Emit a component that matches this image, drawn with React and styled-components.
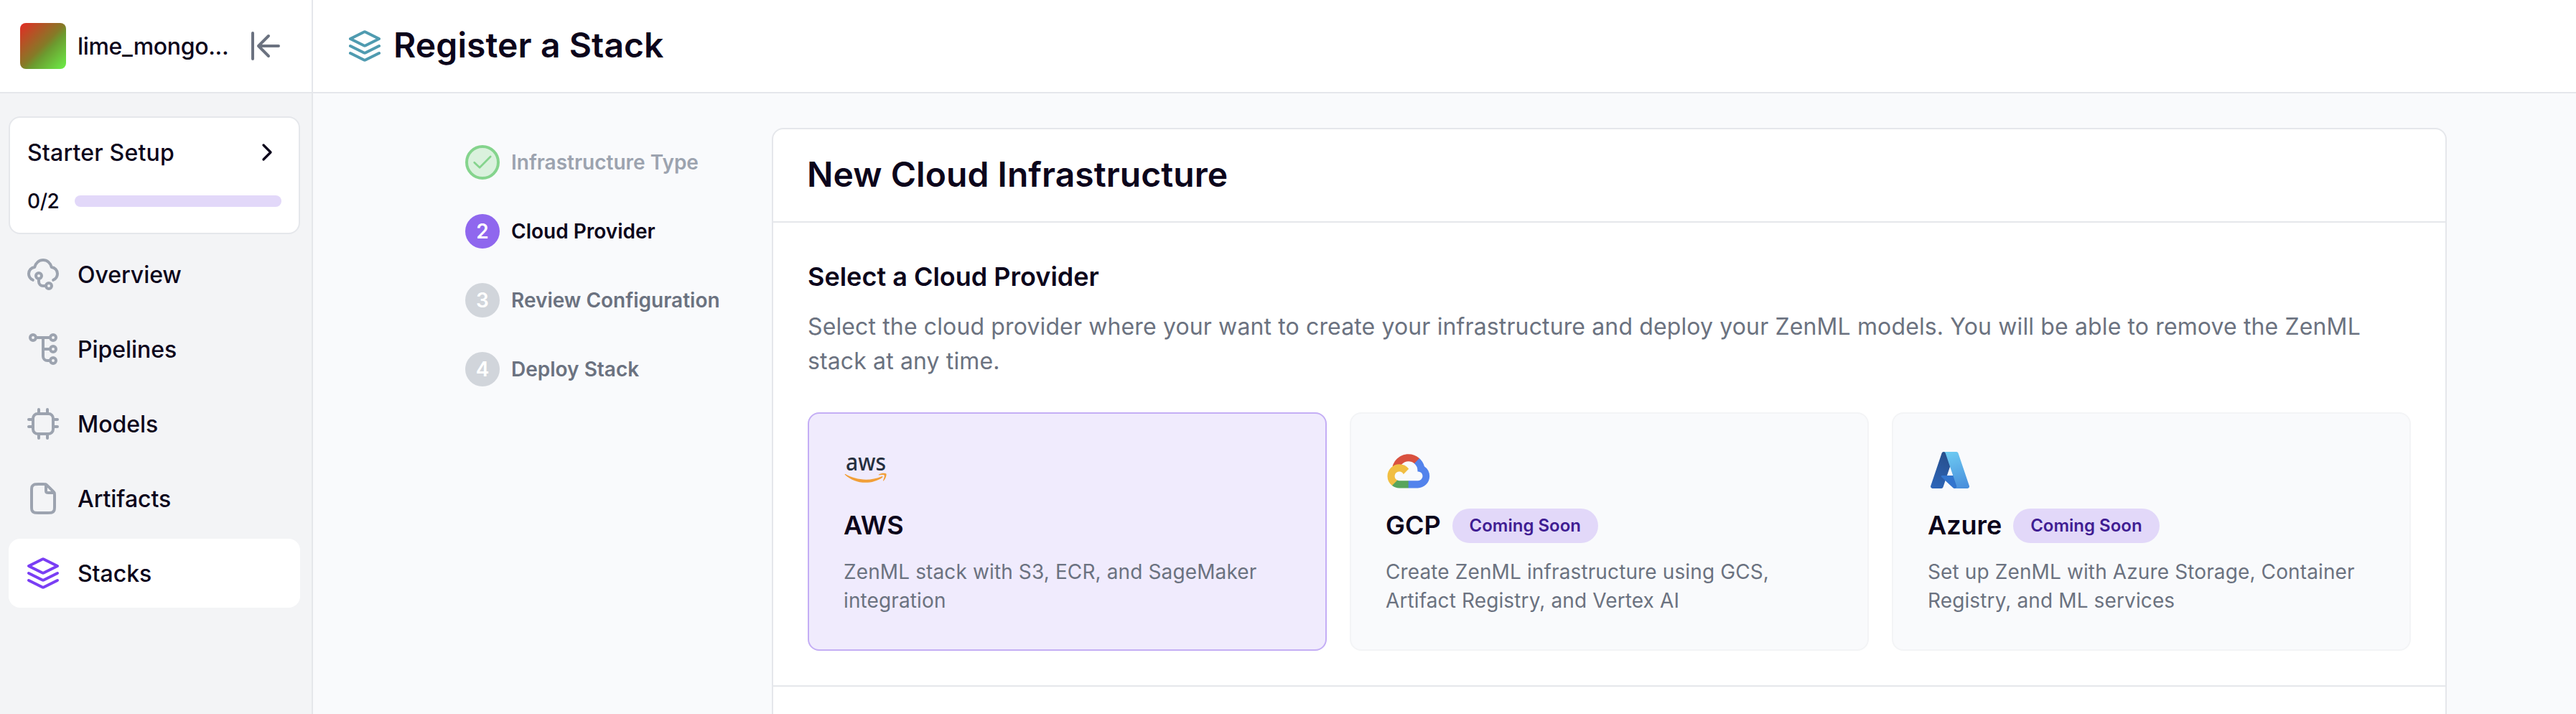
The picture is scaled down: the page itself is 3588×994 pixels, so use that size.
import React from "react";
import styled, { createGlobalStyle, css } from "styled-components";

const GlobalStyle = createGlobalStyle`
  *, *::before, *::after { box-sizing: border-box; }
  html, body { margin: 0; padding: 0; }
  body {
    font-family: Inter, "Liberation Sans", sans-serif;
    color: #0c051b;
    background: #f9fafc;
    overflow: hidden;
    -webkit-font-smoothing: antialiased;
  }
  h1, h2, h3, p { margin: 0; }
`;

const Page = styled.div`
  display: flex;
  width: 100vw;
  height: 100vh;
  overflow: hidden;
`;

/* Sidebar */
const Sidebar = styled.aside`
  display: flex;
  flex-direction: column;
  flex: none;
  width: 436px;
  border-right: 2px solid #e5e7eb;
  background: #f3f4f6;
`;

const SidebarHeader = styled.div`
  display: flex;
  align-items: center;
  gap: 16px;
  height: 130px;
  padding: 0 40px 0 28px;
  border-bottom: 2px solid #e5e7eb;
  background: #fff;
`;

const Avatar = styled.div`
  flex: none;
  width: 64px;
  height: 64px;
  border-radius: 8px;
  background: linear-gradient(135deg, #e52a24 0%, #857b27 50%, #6c9a2f 60%, #6cf048 100%);
`;

const WorkspaceName = styled.span`
  flex: 1;
  padding-top: 2px;
  font-size: 32px;
  font-weight: 500;
  line-height: 48px;
  letter-spacing: -0.32px;
  white-space: nowrap;
`;

const Icon = styled.svg.attrs({
  viewBox: "0 0 24 24",
  fill: "none",
  stroke: "currentColor",
  strokeLinecap: "round",
  strokeLinejoin: "round",
  strokeWidth: 2,
})`
  display: block;
  flex: none;
  width: ${(p) => p.$size || 48}px;
  height: ${(p) => p.$size || 48}px;
  color: ${(p) => p.$color || "inherit"};
`;

const SidebarBody = styled.div`
  display: flex;
  flex-direction: column;
  gap: 8px;
  padding: 32px 16px 0 12px;
`;

const SetupCard = styled.section`
  display: flex;
  flex-direction: column;
  gap: 24px;
  padding: 24px;
  border: 2px solid #e5e7eb;
  border-radius: 16px;
  background: #fff;
`;

const SetupRow = styled.div`
  display: flex;
  align-items: center;
  justify-content: space-between;
`;

const SetupTitle = styled.span`
  height: 48px;
  font-size: 32px;
  font-weight: 500;
  line-height: 50px;
  letter-spacing: 0.19px;
`;

const SetupCount = styled.span`
  font-size: 28px;
  font-weight: 500;
  line-height: 40px;
  letter-spacing: -0.4px;
`;

const ProgressTrack = styled.div`
  width: 288px;
  height: 16px;
  border-radius: 8px;
  background: #e2d8f9;
`;

const Nav = styled.nav`
  display: flex;
  flex-direction: column;
  gap: 8px;
`;

const NavItem = styled.a`
  display: flex;
  align-items: center;
  gap: 24px;
  height: 96px;
  padding: 0 24px;
  border-radius: 16px;
  background: ${(p) => (p.$active ? "#fff" : "transparent")};
`;

const NavLabel = styled.span`
  padding-top: 2px;
  font-size: 32px;
  font-weight: 500;
  line-height: 48px;
  letter-spacing: -0.05px;
`;

/* Main column */
const Main = styled.main`
  display: flex;
  flex-direction: column;
  flex: 1;
  min-width: 0;
`;

const TopBar = styled.header`
  display: flex;
  align-items: center;
  gap: 16px;
  flex: none;
  height: 130px;
  padding: 0 48px;
  border-bottom: 2px solid #e5e7eb;
  background: #fff;
`;

const PageTitle = styled.h1`
  padding-bottom: 2px;
  font-size: 48px;
  font-weight: 600;
  line-height: 60px;
  letter-spacing: 0.1px;
`;

const Content = styled.div`
  display: flex;
  align-items: flex-start;
  padding: 48px 180px 0 212px;
`;

const Steps = styled.ol`
  display: flex;
  flex-direction: column;
  flex: none;
  gap: 48px;
  width: 427px;
  margin: 0;
  padding: 24px 0 0;
  list-style: none;
`;

const Step = styled.li`
  display: flex;
  align-items: center;
  gap: 16px;
  height: 48px;
  font-size: 28px;
  font-weight: 600;
  line-height: 40px;
  color: ${(p) =>
    p.$state === "done" ? "#9ca3af" : p.$state === "active" ? "#0c051b" : "#6b7280"};
`;

const StepBadge = styled.span`
  display: flex;
  align-items: center;
  justify-content: center;
  flex: none;
  width: 48px;
  height: 48px;
  border-radius: 50%;
  color: #fff;
  background: ${(p) => (p.$state === "active" ? "#8f67ee" : "#d1d5db")};
  ${(p) =>
    p.$state === "done" &&
    css`
      border: 4px solid #85d48d;
      background: #daf1dd;
    `}
`;

const CheckMark = styled.svg`
  display: block;
  width: 40px;
  height: 40px;
`;

const Panel = styled.section`
  flex: 1;
  min-width: 0;
  height: 900px;
  border: 2px solid #e5e7eb;
  border-radius: 16px;
  background: #fff;
`;

const PanelHeader = styled.div`
  display: flex;
  align-items: center;
  height: 130px;
  padding: 0 47px 2px;
  border-bottom: 2px solid #e5e7eb;
`;

const PanelTitle = styled.h2`
  font-size: 48px;
  font-weight: 600;
  line-height: 60px;
  letter-spacing: 0.05px;
`;

const PanelBody = styled.div`
  padding: 48px;
  border-bottom: 2px solid #e5e7eb;
`;

const SectionTitle = styled.h3`
  font-size: 36px;
  font-weight: 600;
  line-height: 54px;
`;

const SectionText = styled.p`
  margin-top: 19px;
  font-size: 32px;
  line-height: 48px;
  letter-spacing: 0.13px;
  color: #6b7280;
`;

const ProviderGrid = styled.div`
  display: grid;
  grid-template-columns: repeat(3, 1fr);
  gap: 32px;
  margin-top: 47px;
`;

const ProviderCard = styled.article`
  padding: 48px;
  border: 2px solid ${(p) => (p.$selected ? "#c4aef5" : "#f3f4f6")};
  border-radius: 16px;
  background: ${(p) => (p.$selected ? "#f0ebfd" : "#f9fafc")};
`;

const Logo = styled.svg`
  display: block;
  width: 64px;
  height: 64px;
  overflow: visible;
`;

const ProviderHeading = styled.div`
  display: flex;
  align-items: center;
  gap: 16px;
  height: 56px;
  margin: 16px 0;
`;

const ProviderName = styled.h3`
  padding-bottom: 2px;
  font-size: 36px;
  font-weight: 600;
  line-height: 54px;
  letter-spacing: -0.05px;
`;

const Badge = styled.span`
  height: 48px;
  padding: 0 24px;
  border-radius: 24px;
  font-size: 24px;
  font-weight: 600;
  line-height: 48px;
  white-space: nowrap;
  color: #3f1d93;
  background: #e2d8f9;
`;

const ProviderText = styled.p`
  font-size: 28px;
  line-height: 40px;
  letter-spacing: 0.12px;
  color: #6b7280;
`;

const StacksIcon = (props) => (
  <Icon {...props}>
    <path d="M11.55 2.22a1 1 0 0 1 .9 0L22 7l-9.55 4.78a1 1 0 0 1-.9 0L2 7z" />
    <path d="m2 12 9.55 4.78a1 1 0 0 0 .9 0L22 12" />
    <path d="m2 17 9.55 4.78a1 1 0 0 0 .9 0L22 17" />
  </Icon>
);

const OverviewIcon = (props) => (
  <Icon {...props}>
    <path d="M4.9 15.9C3.2 15.1 2 13.4 2 11.5 2 9.2 3.8 7.2 6.1 7 6.9 4.1 9.2 2 12 2s5.1 2.1 5.9 5c2.3.2 4.1 2.2 4.1 4.5 0 1.9-1.2 3.6-2.9 4.4" />
    <circle cx="9" cy="13" r="2" />
    <circle cx="16" cy="20" r="2" />
    <path d="M9 15v2a3 3 0 0 0 3 3h2" />
  </Icon>
);

const PipelinesIcon = (props) => (
  <Icon {...props}>
    <circle cx="5" cy="4" r="2" />
    <circle cx="19" cy="4" r="2" />
    <circle cx="19" cy="12" r="2" />
    <circle cx="19" cy="20" r="2" />
    <path d="M7 4h10M12 4v13a3 3 0 0 0 3 3h2M12 12h5" />
  </Icon>
);

const ModelsIcon = (props) => (
  <Icon {...props}>
    <rect x="5" y="5" width="14" height="14" rx="3.2" />
    <path d="M9 2v3M15 2v3M9 19v3M15 19v3M2 9h3M2 14h3M19 9h3M19 14h3" />
  </Icon>
);

const ArtifactsIcon = (props) => (
  <Icon {...props}>
    <path d="M14 2.27V6.4c0 .56 0 .84.11 1.05a1 1 0 0 0 .44.44c.21.11.49.11 1.05.11h4.13" />
    <path d="M20 9.99V17.2c0 1.68 0 2.52-.33 3.16a3 3 0 0 1-1.31 1.31c-.64.33-1.48.33-3.16.33H8.8c-1.68 0-2.52 0-3.16-.33a3 3 0 0 1-1.31-1.31C4 19.72 4 18.88 4 17.2V6.8c0-1.68 0-2.52.33-3.16a3 3 0 0 1 1.31-1.31C6.28 2 7.12 2 8.8 2h3.21c.74 0 1.1 0 1.45.08.3.08.6.2.86.36.31.19.57.45 1.09.97l3.18 3.18c.52.52.78.78.97 1.09.16.26.28.56.36.86.08.35.08.71.08 1.45Z" />
  </Icon>
);

const CollapseIcon = (props) => (
  <Icon {...props}>
    <path d="M3 3v18M21 12H7M14 5l-7 7 7 7" />
  </Icon>
);

const ChevronIcon = (props) => (
  <Icon {...props}>
    <path d="m9 18 6-6-6-6" />
  </Icon>
);

const AwsLogo = () => (
  <Logo viewBox="0 0 64 64">
    <text
      x="3"
      y="31.4"
      fontFamily='"Noto Sans", "Open Sans", sans-serif'
      fontSize="33"
      fontWeight="500"
      textLength="56"
      lengthAdjust="spacingAndGlyphs"
      fill="#252f3e"
    >
      aws
    </text>
    <g transform="translate(1.4 13) scale(.1925)" fill="#f19f38">
      <path d="M273.5 143.7c-32.9 24.3-80.7 37.2-121.8 37.2-57.6 0-109.5-21.3-148.7-56.7-3.1-2.8-.3-6.6 3.4-4.4 42.4 24.6 94.7 39.5 148.8 39.5 36.5 0 76.6-7.6 113.5-23.2 5.5-2.5 10.2 3.6 4.8 7.6z" />
      <path d="M287.2 128.1c-4.2-5.4-27.8-2.6-38.5-1.3-3.2.4-3.7-2.4-.8-4.5 18.8-13.2 49.7-9.4 53.3-5 3.6 4.5-1 35.4-18.6 50.2-2.7 2.3-5.3 1.1-4.1-1.9 4-9.9 12.9-32.2 8.7-37.5z" />
    </g>
  </Logo>
);

const GcpLogo = () => (
  <Logo viewBox="0 0 64 64">
    <g transform="translate(2.5 8.2) scale(.2293)">
      <path fill="#d9513f" d="M170.25 56.82l22.25-22.25 1.49-9.37C153.44-11.68 88.98-7.5 52.42 33.92 42.27 45.42 34.73 59.76 30.72 74.57l7.97-1.12 44.5-7.34 3.44-3.51c19.8-21.75 53.27-24.67 76.13-6.17z" />
      <path fill="#5383ec" d="M224.2 73.92a100.25 100.25 0 0 0-30.21-48.72l-31.23 31.23a55.52 55.52 0 0 1 20.37 44.04v5.54a27.8 27.8 0 1 1 0 55.28h-55.67l-5.46 5.93v33.34l5.46 5.24h55.67c39.93.31 72.56-31.5 72.87-71.43a72.34 72.34 0 0 0-31.8-60.45" />
      <path fill="#58a55c" d="M71.87 205.8h55.59v-44.51H71.87a27.4 27.4 0 0 1-11.4-2.5l-7.89 2.42-22.4 22.25-1.96 7.58a72 72 0 0 0 43.65 14.76" />
      <path fill="#f1be42" d="M71.87 61.43C31.94 61.66-.24 94.23 0 134.16a72.3 72.3 0 0 0 28.22 56.88l32.25-32.25a27.8 27.8 0 1 1 36.78-36.77l32.24-32.25a72.25 72.25 0 0 0-57.62-28.34" />
    </g>
  </Logo>
);

const AzureLogo = () => (
  <Logo viewBox="0 0 64 64">
    <defs>
      <linearGradient id="azLeft" x1="60.9" y1="9.6" x2="18.7" y2="100" gradientUnits="userSpaceOnUse">
        <stop offset="0" stopColor="#264b87" />
        <stop offset="1" stopColor="#2e68bc" />
      </linearGradient>
      <linearGradient id="azShade" x1="60.2" y1="48.6" x2="50" y2="52" gradientUnits="userSpaceOnUse">
        <stop offset="0" stopColor="#000" stopOpacity=".3" />
        <stop offset=".35" stopColor="#000" stopOpacity=".16" />
        <stop offset="1" stopColor="#000" stopOpacity="0" />
      </linearGradient>
      <linearGradient id="azRight" x1="45.8" y1="7.8" x2="72.9" y2="88.6" gradientUnits="userSpaceOnUse">
        <stop offset="0" stopColor="#6dcaf2" />
        <stop offset="1" stopColor="#4a90dc" />
      </linearGradient>
    </defs>
    <g transform="translate(1.6 1) scale(.614)">
      <path fill="url(#azLeft)" d="M33.34 6.54h26.04l-27.03 80.09a4.15 4.15 0 0 1-3.93 2.82H8.15a4.15 4.15 0 0 1-3.93-5.47L29.4 9.37a4.15 4.15 0 0 1 3.94-2.83z" />
      <path fill="#3375ce" d="M71.18 60.26H29.89a1.91 1.91 0 0 0-1.31 3.31l26.53 24.76a4.17 4.17 0 0 0 2.85 1.12h23.38z" />
      <path fill="url(#azShade)" d="M33.34 6.54a4.12 4.12 0 0 0-3.94 2.88L4.25 83.92a4.14 4.14 0 0 0 3.91 5.54h20.79a4.44 4.44 0 0 0 3.41-2.9l5.01-14.78 17.91 16.7a4.24 4.24 0 0 0 2.67.98h23.29L71.02 60.26l-29.78.01L59.47 6.54z" />
      <path fill="url(#azRight)" d="M66.6 9.36a4.15 4.15 0 0 0-3.93-2.82H33.65a4.15 4.15 0 0 1 3.93 2.82l25.18 74.62a4.15 4.15 0 0 1-3.93 5.47h29.02a4.15 4.15 0 0 0 3.93-5.47z" />
    </g>
  </Logo>
);

const navItems = [
  { label: "Overview", Glyph: OverviewIcon },
  { label: "Pipelines", Glyph: PipelinesIcon },
  { label: "Models", Glyph: ModelsIcon },
  { label: "Artifacts", Glyph: ArtifactsIcon },
  { label: "Stacks", Glyph: StacksIcon, active: true },
];

const steps = [
  { label: "Infrastructure Type", state: "done" },
  { label: "Cloud Provider", state: "active" },
  { label: "Review Configuration", state: "todo" },
  { label: "Deploy Stack", state: "todo" },
];

const providers = [
  {
    name: "AWS",
    Mark: AwsLogo,
    selected: true,
    text: "ZenML stack with S3, ECR, and SageMaker integration",
  },
  {
    name: "GCP",
    Mark: GcpLogo,
    soon: true,
    text: "Create ZenML infrastructure using GCS, Artifact Registry, and Vertex AI",
  },
  {
    name: "Azure",
    Mark: AzureLogo,
    soon: true,
    text: "Set up ZenML with Azure Storage, Container Registry, and ML services",
  },
];

export default function App() {
  return (
    <Page>
      <GlobalStyle />
      <Sidebar>
        <SidebarHeader>
          <Avatar />
          <WorkspaceName>lime_mongo...</WorkspaceName>
          <CollapseIcon $color="#6b7280" />
        </SidebarHeader>
        <SidebarBody>
          <SetupCard>
            <SetupRow>
              <SetupTitle>Starter Setup</SetupTitle>
              <ChevronIcon $size={40} />
            </SetupRow>
            <SetupRow>
              <SetupCount>0/2</SetupCount>
              <ProgressTrack />
            </SetupRow>
          </SetupCard>
          <Nav>
            {navItems.map(({ label, Glyph, active }) => (
              <NavItem key={label} $active={active}>
                <Glyph $color={active ? "#7a3ef4" : "#9ca3af"} />
                <NavLabel>{label}</NavLabel>
              </NavItem>
            ))}
          </Nav>
        </SidebarBody>
      </Sidebar>
      <Main>
        <TopBar>
          <StacksIcon $color="#4f9bb0" />
          <PageTitle>Register a Stack</PageTitle>
        </TopBar>
        <Content>
          <Steps>
            {steps.map(({ label, state }, i) => (
              <Step key={label} $state={state}>
                <StepBadge $state={state}>
                  {state === "done" ? (
                    <CheckMark viewBox="0 0 40 40" fill="none" stroke="#85d48d" strokeWidth="2.7" strokeLinecap="round" strokeLinejoin="round">
                      <path d="M8.7 20.2l7.4 7L31.2 12" />
                    </CheckMark>
                  ) : (
                    i + 1
                  )}
                </StepBadge>
                {label}
              </Step>
            ))}
          </Steps>
          <Panel>
            <PanelHeader>
              <PanelTitle>New Cloud Infrastructure</PanelTitle>
            </PanelHeader>
            <PanelBody>
              <SectionTitle>Select a Cloud Provider</SectionTitle>
              <SectionText>
                Select the cloud provider where your want to create your infrastructure and deploy
                your ZenML models. You will be able to remove the ZenML stack at any time.
              </SectionText>
              <ProviderGrid>
                {providers.map(({ name, Mark, selected, soon, text }) => (
                  <ProviderCard key={name} $selected={selected}>
                    <Mark />
                    <ProviderHeading>
                      <ProviderName>{name}</ProviderName>
                      {soon && <Badge>Coming Soon</Badge>}
                    </ProviderHeading>
                    <ProviderText>{text}</ProviderText>
                  </ProviderCard>
                ))}
              </ProviderGrid>
            </PanelBody>
          </Panel>
        </Content>
      </Main>
    </Page>
  );
}
